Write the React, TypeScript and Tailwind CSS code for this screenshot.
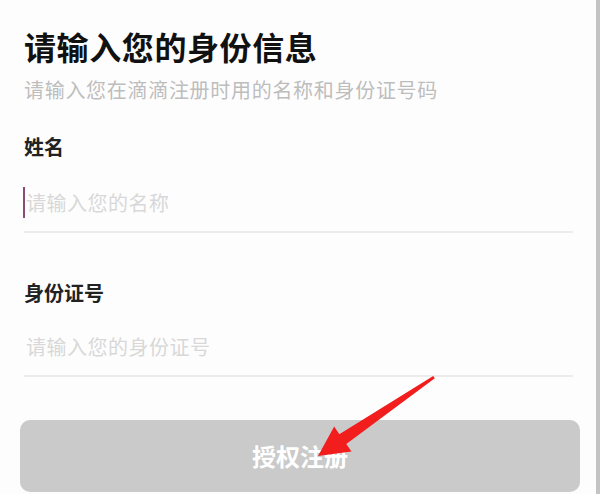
import React from 'react';

const font = { fontFamily: '"Noto Sans CJK SC", "Noto Sans", sans-serif' };

const Field = ({ label, placeholder, cursor, labelTop, inputTop }: { label: string; placeholder: string; cursor?: boolean; labelTop: string; inputTop: string }) => (
  <div>
    <div className={`${labelTop} text-[20px] leading-[20px] font-semibold text-[#222]`}>{label}</div>
    <div className={`${inputTop} relative flex h-[20px] items-center pl-[2px] text-[20px] leading-[20px] tracking-[0.5px] text-[#d8d8d8]`}>
      {cursor && <span className="absolute -left-px top-[-6px] h-[31px] w-[2px] bg-[#8a4a78]" />}
      {placeholder}
    </div>
    <div className="mt-[18px] h-[2px] bg-[#ececec]" />
  </div>
);

export default function App() {
  return (
    <div style={font} className="relative h-[494px] w-[600px] overflow-hidden border-r-4 border-[#c4c4c4] bg-[#fdfdfd]">
      <div className="pl-6 pr-[23px] pt-[30px]">
        <h1 className="text-[32px] leading-[32px] font-bold tracking-[0.6px] text-[#111]">请输入您的身份信息</h1>
        <p className="mt-[18px] text-[20px] leading-[20px] tracking-[0.7px] text-[#bdbdbd]">请输入您在滴滴注册时用的名称和身份证号码</p>

        <Field label="姓名" placeholder="请输入您的名称" cursor labelTop="mt-[37px]" inputTop="mt-[36px]" />
        <Field label="身份证号" placeholder="请输入您的身份证号" labelTop="mt-[50px]" inputTop="mt-[34px]" />
      </div>

      <button className="ml-5 mr-4 mt-[43px] flex h-[72px] w-[560px] items-center justify-center rounded-[10px] bg-[#cacaca] text-[24px] font-semibold text-white">
        授权注册
      </button>

      {/* red annotation arrow */}
      <svg className="absolute inset-0" width="600" height="494" viewBox="0 0 600 494">
        <polygon
          points="434.8,378.3 346.3,444 351.5,451.5 318,456 334.2,426.5 339.3,434.2 433.2,375.9"
          fill="#f21d1d"
        />
      </svg>
    </div>
  );
}
